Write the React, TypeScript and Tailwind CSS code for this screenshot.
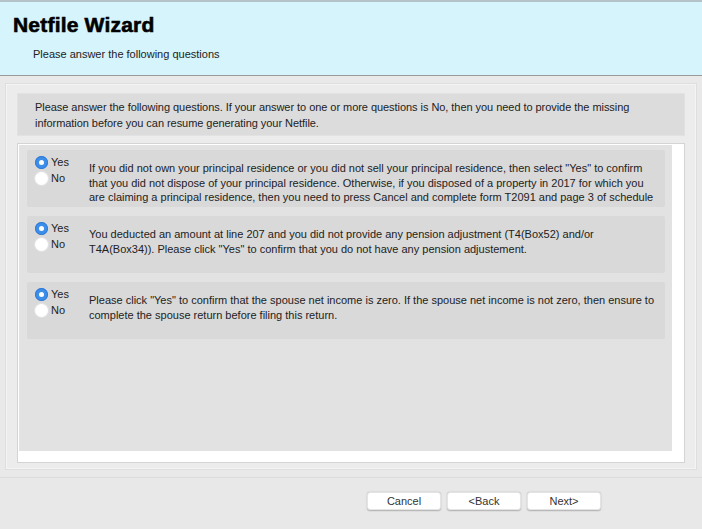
import React, { useState } from "react";

const questions = [
  {
    id: "residence",
    lines: [
      'If you did not own your principal residence or you did not sell your principal residence, then select "Yes" to confirm',
      "that you did not dispose of your principal residence. Otherwise, if you disposed of a property in 2017 for which you",
      "are claiming a principal residence, then you need to press Cancel and complete form T2091 and page 3 of schedule",
    ],
  },
  {
    id: "pension",
    lines: [
      "You deducted an amount at line 207 and you did not provide any pension adjustment (T4(Box52) and/or",
      'T4A(Box34)). Please click "Yes" to confirm that you do not have any pension adjustement.',
    ],
  },
  {
    id: "spouse",
    lines: [
      'Please click "Yes" to confirm that the spouse net income is zero. If the spouse net income is not zero, then ensure to',
      "complete the spouse return before filing this return.",
    ],
  },
];

const Radio = ({ checked, label, onClick }: { checked: boolean; label: string; onClick: () => void }) => (
  <button onClick={onClick} className="flex items-center gap-[3px] h-[16px] text-[11px] text-[#222]">
    {checked ? (
      <span className="w-[13px] h-[13px] rounded-full bg-[#3d8ee9] flex items-center justify-center shadow-[inset_0_0_0_1px_#2f7ad6]">
        <span className="w-[5px] h-[5px] rounded-full bg-white" />
      </span>
    ) : (
      <span className="w-[13px] h-[13px] rounded-full bg-white shadow-[0_0_0_1px_#e2e2e2]" />
    )}
    <span>{label}</span>
  </button>
);

const App = () => {
  const [answers, setAnswers] = useState<Record<string, boolean>>({
    residence: true,
    pension: true,
    spouse: true,
  });

  return (
    <div className="w-[702px] h-[529px] bg-[#e9e9e9] flex flex-col overflow-hidden" style={{ fontFamily: '"Liberation Sans", Arial, sans-serif' }}>
      {/* header */}
      <div className="h-[76px] bg-[#d5f4fc] border-t-2 border-t-[#b3c3c8] border-b border-b-[#9a9a9a] shrink-0">
        <h1 className="pl-[13px] pt-[10px] text-[21px] leading-[26px] font-bold text-black tracking-[0.2px] [-webkit-text-stroke:0.6px_black]">Netfile Wizard</h1>
        <p className="pl-[33px] pt-[8px] text-[11px] text-[#222]">Please answer the following questions</p>
      </div>

      {/* body */}
      <div className="flex-1 px-[5px] pt-[7px]">
        <div className="h-[387px] border border-[#dedede] bg-[#ececec] px-[11px] pt-[9px] shadow-[inset_0_0_0_1px_#f4f4f4]">
          <div className="h-[43px] bg-[#dcdcdc] border border-[#e2e2e2] pl-[17px] pt-[5px] text-[11px] leading-[16px] text-[#222] tracking-[-0.05px]">
            <div className="whitespace-nowrap">
              Please answer the following questions. If your answer to one or more questions is No, then you need to provide the missing
            </div>
            <div className="whitespace-nowrap">information before you can resume generating your Netfile.</div>
          </div>

          <div className="mt-[7px] h-[320px] bg-white border border-[#d4d4d4] pl-[1px] pt-[1px] pr-[12px] pb-[11px]">
            <div className="h-full bg-[#e2e2e2] flex flex-col gap-[9px] pl-[8px] pr-[7px] pt-[5px]">
              {questions.map((q) => (
                <div key={q.id} className="h-[57px] bg-[#d9d9d9] rounded-[2px] flex pl-[8px] pt-[4px]">
                  <div className="w-[54px] flex flex-col shrink-0">
                    <Radio checked={answers[q.id]} label="Yes" onClick={() => setAnswers({ ...answers, [q.id]: true })} />
                    <Radio checked={!answers[q.id]} label="No" onClick={() => setAnswers({ ...answers, [q.id]: false })} />
                  </div>
                  <div className="pt-[7px] text-[11px] leading-[14.5px] text-[#222]">
                    {q.lines.map((l, i) => (
                      <div key={i} className="whitespace-nowrap">{l}</div>
                    ))}
                  </div>
                </div>
              ))}
            </div>
          </div>
        </div>
      </div>

      {/* footer */}
      <div className="h-[52px] border-t border-[#dcdcdc] bg-[#e8e8e8] shrink-0 flex justify-end pr-[101px] pt-[14px] gap-[6px]">
        {["Cancel", "<Back", "Next>"].map((b) => (
          <button
            key={b}
            className="w-[74px] h-[18px] bg-white rounded-[3px] text-[11px] text-[#333] shadow-[0_0.5px_1.5px_rgba(0,0,0,0.25)] border border-[#e4e4e4]"
          >
            {b}
          </button>
        ))}
      </div>
    </div>
  );
};

export default App;
